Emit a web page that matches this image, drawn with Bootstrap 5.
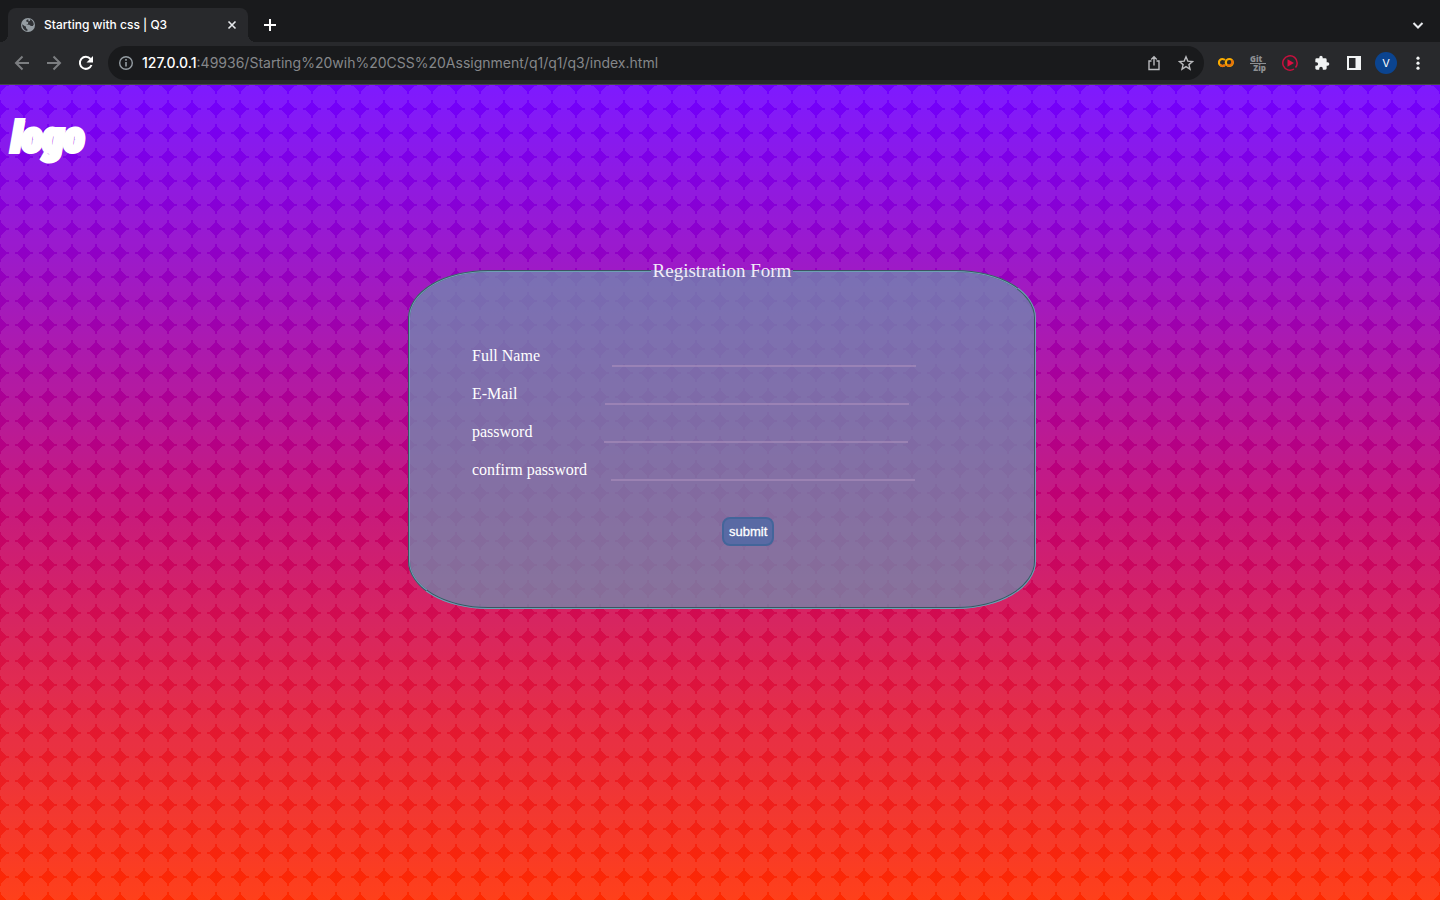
<!DOCTYPE html>
<html lang="en">
<head>
<meta charset="utf-8">
<meta name="viewport" content="width=device-width, initial-scale=1">
<title>Starting with css | Q3</title>
<link href="https://cdn.jsdelivr.net/npm/bootstrap@5.3.0/dist/css/bootstrap.min.css" rel="stylesheet">
<style>
body{background:#28292c;font-family:"Liberation Serif",serif;font-size:16px;line-height:18px;color:#fff}
svg{display:block;flex:none}
.tool-btn{background:none;border:0;padding:0;color:inherit}
.tab-strip{background:#191a1c;height:42px;padding:8px 14px 0 8px}
.tab-item{position:relative;width:240px;height:34px;background:#28292c;border-radius:8px 8px 0 0;padding:0 10px 0 12px}
.tab-item::before,.tab-item::after{content:"";position:absolute;bottom:0;width:8px;height:8px}
.tab-item::before{left:-8px;background:radial-gradient(circle at 0 0,transparent 8px,#28292c 8px)}
.tab-item::after{right:-8px;background:radial-gradient(circle at 100% 0,transparent 8px,#28292c 8px)}
.tab-title{font:500 12px/16px Inter,sans-serif;color:#fff}
.toolbar{height:43px;padding:4px 14px;border-bottom:1px solid #454649}
.dim{color:#7c7e81}
.address{height:34px;border-radius:17px;background:#191a1c;padding:0 10px;margin:0 14px;color:#b9babd}
.url{font:14px/18px Inter,sans-serif;color:#85878a}
.url strong{color:#fff;font-weight:500}
.gitzip{font:900 8px/8px "Noto Sans",sans-serif;color:#8d8f92;width:16px}
.gitzip span:first-child{border-bottom:1px solid #8d8f92;text-align:left}
.account{gap:13px;margin-left:-3px}
.avatar{width:22px;height:22px;border-radius:50%;background:#0b4490;font:11px/22px Inter,sans-serif}
.page{background:radial-gradient(circle at 12px 12px,rgba(255,255,255,.1) 12px,transparent 12px) 0 0/24px 24px,linear-gradient(#7000ff,#c1006e 52%,#ff2a00)}
.brand-logo{margin:0;padding:26px 11px 0;height:175px;font:italic 900 43px/52px "Roboto Condensed","Liberation Sans",sans-serif;-webkit-text-stroke:4px #fff;text-shadow:2px 1px 0 #fff5d8}
.reg-form{width:628px;max-width:100%;margin-left:4px;border:2px groove #6f9fb5;border-radius:80px/48px;background:rgba(111,141,175,.75);padding:64px 62px 61px}
.reg-form legend{float:none;width:auto;margin:0 auto;padding:0 2px;font-size:19px;line-height:22px;color:#f1ecf8}
.entry{height:38px}
.entry input{width:304px;height:21px;padding:1px 2px;background:none;border:0;border-bottom:2px solid rgba(175,145,190,.55);color:#fff;outline:0}
.gap-name{margin-left:72px}
.gap-mail{margin-left:88px}
.gap-confirm{margin-left:24px}
.send-btn{margin:19px 0 0 250px;height:29px;padding:0 5px;border:2px solid #43659a;border-radius:8px;background:#596aa4;color:#fff;font:13px/16px "Liberation Sans",sans-serif;-webkit-text-stroke:.3px #fff}
</style>
</head>
<body class="min-vh-100 d-flex flex-column">
<header>
<div class="tab-strip d-flex">
<div class="tab-item d-flex align-items-center">
<svg width="16" height="16" viewBox="0 0 16 16"><circle cx="8" cy="8" r="7" fill="#959da3"/><path d="M2.200 7.200 5 9.200l1 .2v1.800l1.400 1V14C4.500 13.700 2.200 11 2.200 7.200zM8.200 2.200c-1.700.6-2.500 1.500-1.600 2.600l1.600.2-.2 1.900-2 .5 3.300.3 1.600 1.200h1.900l1-1.500c-.1-2.500-1.600-4.500-3.700-5.200v1.500l-1.500.7z" fill="#303236"/></svg>
<span class="tab-title ms-2 flex-grow-1">Starting with css | Q3</span>
<button class="tool-btn" aria-label="Close tab"><svg width="12" height="12" viewBox="0 0 12 12"><path d="m2.500 2.500 7 7m0-7-7 7" stroke="#e8eaed" stroke-width="1.600"/></svg></button>
</div>
<button class="tool-btn ms-3" aria-label="New tab"><svg width="12" height="12" viewBox="0 0 12 12"><path d="M6 0v12M0 6h12" stroke="#fff" stroke-width="2"/></svg></button>
<button class="tool-btn ms-auto" aria-label="Search tabs"><svg width="16" height="16" viewBox="0 0 16 16"><path d="m3.500 6 4.500 4.500L12.500 6" fill="none" stroke="#e8eaed" stroke-width="2"/></svg></button>
</div>
<nav class="toolbar d-flex align-items-center" aria-label="Browser">
<div class="d-flex gap-3">
<button class="tool-btn dim" aria-label="Back"><svg width="16" height="16" viewBox="0 0 16 16"><path d="M15 8H2m6.500-6.500L2 8l6.500 6.500" fill="none" stroke="currentColor" stroke-width="2"/></svg></button>
<button class="tool-btn dim" aria-label="Forward"><svg width="16" height="16" viewBox="0 0 16 16"><path d="M1 8h13M7.500 1.500 14 8l-6.500 6.500" fill="none" stroke="currentColor" stroke-width="2"/></svg></button>
<button class="tool-btn" aria-label="Reload"><svg width="16" height="16" viewBox="0 0 16 16"><path d="M13.500 10A6 6 0 1 1 12.500 4" fill="none" stroke="#fff" stroke-width="2"/><path d="M15 1v6.500H8.500z" fill="#fff"/></svg></button>
</div>
<div class="address d-flex align-items-center flex-grow-1">
<svg width="16" height="16" viewBox="0 0 16 16"><circle cx="8" cy="8" r="6.300" fill="none" stroke="#959da3" stroke-width="1.400"/><path d="M8 7v4.500M8 4v1.700" stroke="#959da3" stroke-width="1.600"/></svg>
<span class="url ms-2 flex-grow-1"><strong>127.0.0.1</strong>:49936/Starting%20wih%20CSS%20Assignment/q1/q1/q3/index.html</span>
<button class="tool-btn me-3" aria-label="Share"><svg width="16" height="16" viewBox="0 0 16 16"><path d="M5.500 6H3v8.500h10V6h-2.500M8 10.500V2M5.200 4.600 8 1.800l2.800 2.800" fill="none" stroke="currentColor" stroke-width="1.400"/></svg></button>
<button class="tool-btn" aria-label="Bookmark"><svg width="16" height="16" viewBox="0 0 16 16"><path d="m8 1.800 1.800 4.300 4.700.4-3.600 3.100 1.100 4.600L8 11.700l-4 2.500 1.100-4.600-3.600-3.100 4.700-.4z" fill="none" stroke="currentColor" stroke-width="1.400"/></svg></button>
</div>
<div class="d-flex align-items-center gap-3">
<button class="tool-btn" aria-label="Colab"><svg width="16" height="16" viewBox="0 0 16 16"><g fill="none" stroke="#f9ab00" stroke-width="2.200"><path d="M7 9.900a3.500 3.500 0 1 1 0-4.800"/><circle cx="11.300" cy="7.500" r="3.500"/></g><path d="M7 9.900a3.500 3.500 0 0 1-4.800 0M13.800 5.100A3.500 3.500 0 0 1 8.900 9.900" fill="none" stroke="#e8710a" stroke-width="2.200"/></svg></button>
<button class="tool-btn gitzip d-flex flex-column" aria-label="GitZip"><span class="align-self-stretch">Git</span><span class="align-self-end">Zip</span></button>
<button class="tool-btn" aria-label="Video extension"><svg width="16" height="16" viewBox="0 0 16 16"><path d="M12 14A7.200 7.200 0 1 1 15.200 8c0 1.700-.6 3.200-1.700 4.500" fill="none" stroke="#c8103e" stroke-width="1.500"/><path d="m5.500 4.300 6.500 3.700-6.500 3.700z" fill="#dc0f42"/></svg></button>
<button class="tool-btn" aria-label="Extensions"><svg width="16" height="16" viewBox="0 0 24 24"><path fill="#f1f3f4" d="M20.500 11H19V7a2 2 0 0 0-2-2h-4V3.500a2.500 2.500 0 0 0-5 0V5H4a2 2 0 0 0-2 2v3.800h1.500a2.700 2.700 0 0 1 0 5.400H2V20c0 1.100.9 2 2 2h3.800v-1.500a2.700 2.700 0 0 1 5.400 0V22H17a2 2 0 0 0 2-2v-4h1.500a2.500 2.500 0 0 0 0-5z"/></svg></button>
<button class="tool-btn" aria-label="Side panel"><svg width="16" height="16" viewBox="0 0 16 16"><path fill="#f1f3f4" fill-rule="evenodd" d="M1 1h14v14H1zm2 2v10h6.500V3z"/></svg></button>
<div class="account d-flex align-items-center"><button class="tool-btn avatar" aria-label="Profile">V</button>
<button class="tool-btn" aria-label="Menu"><svg width="16" height="16" viewBox="0 0 16 16"><g fill="#f1f3f4"><circle cx="8" cy="3.200" r="1.600"/><circle cx="8" cy="8.200" r="1.600"/><circle cx="8" cy="13.200" r="1.600"/></g></svg></button></div>
</div>
</nav>
</header>
<main class="page flex-grow-1">
<h1 class="brand-logo">logo</h1>
<form class="d-flex justify-content-center">
<fieldset class="reg-form">
<legend>Registration Form</legend>
<div class="entry"><label for="fullName">Full Name</label><input class="gap-name" id="fullName" type="text"></div>
<div class="entry"><label for="email">E-Mail</label><input class="gap-mail" id="email" type="email"></div>
<div class="entry"><label for="pass">password</label><input class="gap-name" id="pass" type="password"></div>
<div class="entry"><label for="confirmPass">confirm password</label><input class="gap-confirm" id="confirmPass" type="password"></div>
<button class="send-btn" type="button">submit</button>
</fieldset>
</form>
</main>
<script src="https://cdn.jsdelivr.net/npm/bootstrap@5.3.0/dist/js/bootstrap.bundle.min.js"></script>
</body>
</html>
